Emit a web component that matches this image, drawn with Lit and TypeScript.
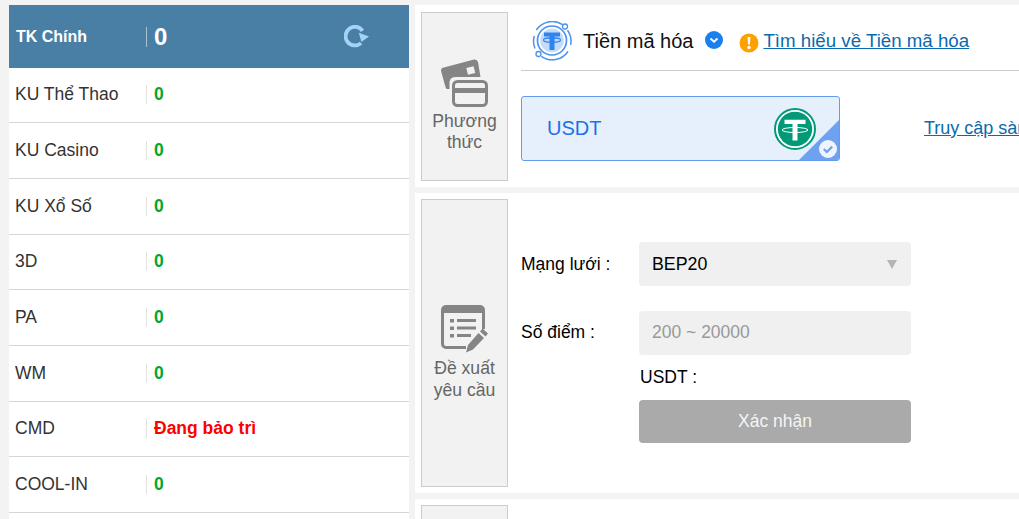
import { LitElement, html, css, svg } from "lit";
import { customElement } from "lit/decorators.js";

const rows: [string, string][] = [
  ["KU Thể Thao", "0"], ["KU Casino", "0"], ["KU Xổ Số", "0"], ["3D", "0"], ["PA", "0"],
  ["WM", "0"], ["CMD", "Đang bảo trì"], ["COOL-IN", "0"], ["", ""],
];

const refreshIcon = svg`<svg class="refresh" viewBox="0 0 26 24" width="26" height="24"><path d="M17 18.100A9.300 9.300 0 1 1 18.500 5.800" fill="none" stroke="#a3d3f7" stroke-width="3.800"/><path d="M14.800 7.800 25 11.500 17.400 17z" fill="#a3d3f7"/></svg>`;

const cardIcon = svg`<svg class="side-icon" viewBox="0 0 48 48" width="48" height="48">
  <path d="M1 9 33 .5Q36 0 37 3L39.500 18H15Q9 18 8.500 23V30H6Q5 30 4.500 28L0 12Q0 10 1 9Z" fill="#858585"/>
  <rect x="26" y="8" width="7.500" height="7" transform="rotate(-14 30 11.500)" fill="#f2f2f2"/>
  <rect x="12.500" y="22.500" width="33" height="24" rx="4" fill="none" stroke="#858585" stroke-width="3"/>
  <rect x="12.500" y="29" width="33" height="5" fill="#858585"/>
</svg>`;

const formIcon = svg`<svg class="side-icon" viewBox="0 0 48 48" width="48" height="48">
  <path d="M1.500 5V39a3.500 3.500 0 0 0 3.500 3.500H25M42.500 24V5" fill="none" stroke="#858585" stroke-width="3"/>
  <path d="M0 5a5 5 0 0 1 5-5h34a5 5 0 0 1 5 5v3H0z" fill="#858585"/>
  <g fill="#858585"><rect x="9" y="14" width="4" height="3.500"/><rect x="9" y="21.500" width="4" height="3.500"/><rect x="9" y="29" width="4" height="3.500"/>
  <rect x="16" y="14" width="19" height="3"/><rect x="16" y="21.500" width="19" height="3"/><rect x="16" y="29" width="14" height="3"/>
  <path d="M41.500 23.500l5.500 5-2.500 3-5.500-5zM37.500 28l5.500 5-11 11.500-7 3 2-7.500z"/></g>
</svg>`;

const coinOutline = svg`<svg viewBox="0 0 40 40" width="40" height="40">
  <path d="M30.500 3.600A19 19 0 0 0 4.300 9M2.300 15A19 19 0 0 0 3 27.500M9.300 35.300A19 19 0 0 0 36 30.500M38.600 24A19 19 0 0 0 35.500 9.200" fill="none" stroke="#4b93ee" stroke-width="1.500"/>
  <circle cx="33" cy="5.500" r="2.500" fill="#fff" stroke="#4b93ee" stroke-width="1.300"/>
  <circle cx="6.500" cy="33" r="2.500" fill="#fff" stroke="#4b93ee" stroke-width="1.300"/>
  <circle cx="20" cy="19.500" r="14.500" fill="#fff" stroke="#4b93ee" stroke-width="1.700"/>
  <circle cx="20" cy="19.500" r="11.800" fill="#c4dbfa"/>
  <path d="M12 11.500h16v4h-5.500v13.500h-5V15.500H12z" fill="#2f84ef"/>
  <ellipse cx="20" cy="19" rx="8.500" ry="2.200" fill="none" stroke="#2f84ef" stroke-width="1.400"/>
</svg>`;

const tether = svg`<svg class="tether" viewBox="0 0 42 42" width="42" height="42">
  <circle cx="21" cy="21" r="20" fill="#fff" stroke="#009a78" stroke-width="2"/>
  <circle cx="21" cy="21" r="17.200" fill="#009a78"/>
  <path d="M10.500 11.800h21v4.200h-8v16.500h-5V16h-8z" fill="#fff"/>
  <ellipse cx="21" cy="22" rx="13" ry="2.500" fill="none" stroke="#fff" stroke-width="1"/>
</svg>`;

@customElement("app-root")
export class AppRoot extends LitElement {
  static styles = css`
    :host {
      display: flex; gap: 6px; height: 519px; width: 1019px; overflow: hidden;
      padding: 5px 0 0 9px; box-sizing: border-box; background: #f3f3f3;
      font-family: "Liberation Sans", Arial, sans-serif; color: #333;
    }
    .sidebar { width: 400px; flex: none; background: #fff; }
    .head { height: 62.600px; box-sizing: border-box; padding-top: 1px; background: #4a7fa5; display: flex; align-items: center; color: #fff; }
    .row { height: 55.680px; box-sizing: border-box; border-bottom: 1px solid #d6d6d6; display: flex; align-items: center; font-size: 17.500px; }
    .name { width: 137px; flex: none; box-sizing: border-box; padding-left: 6px; white-space: nowrap; }
    .head .name { font-size: 16px; font-weight: bold; padding-left: 7px; }
    .val { border-left: 1px solid #e2e2e2; padding-left: 7px; font-weight: bold; line-height: 19px; color: #00a72d; }
    .val.down { color: #f00; }
    .head .val { color: #fff; font-size: 24px; border-left-color: #a9c2d4; line-height: 20px; }
    .refresh { margin-left: 177px; }
    .main { flex: 1; min-width: 0; display: flex; flex-direction: column; gap: 6px; }
    .panel { background: #fff; padding: 7px 0 6px 6px; display: flex; gap: 13px; flex: none; box-sizing: border-box; }
    .p1 { height: 182px; }
    .p2 { height: 300px; padding-top: 6px; }
    .p3 { height: 60px; padding-top: 6px; }
    .side {
      width: 87px; flex: none; box-sizing: border-box; border: 1px solid #ccc; background: #f2f2f2;
      display: flex; flex-direction: column; align-items: center; justify-content: center;
      font-size: 17.600px; line-height: 21.500px; color: #666; text-align: center; padding-top: 19px;
    }
    .p2 .side { line-height: 22px; padding-top: 20px; }
    .side-icon { margin-bottom: 4px; flex: none; }
    .content { flex: 1; min-width: 0; }
    .method { height: 59px; border-bottom: 1px solid #ccc; display: flex; align-items: center; white-space: nowrap; padding-left: 11px; box-sizing: border-box; }
    .method-title { font-size: 20px; color: #111; margin-left: 11px; }
    .chev { margin-left: 12px; margin-bottom: 2px; }
    .warn { margin-left: 16px; margin-top: 4px; }
    a { color: #0a6aad; text-decoration: underline; }
    .learn { font-size: 18.700px; margin-left: 4px; }
    .tiles { display: flex; align-items: center; margin-top: 25px; white-space: nowrap; }
    .tile {
      width: 319px; height: 65px; flex: none; box-sizing: border-box; border: 1px solid #639cec; border-radius: 3px;
      background: #e6f0fd; display: flex; align-items: center; padding-left: 25px; color: #1f6fe8;
      font-size: 20px; position: relative; overflow: hidden;
    }
    .tether { position: absolute; left: 252px; top: 11px; }
    .corner { position: absolute; right: 0; bottom: 0; width: 40px; height: 40px; background: #6ea1f0; clip-path: polygon(100% 0, 100% 100%, 0 100%); }
    .check { position: absolute; right: 2px; bottom: 2px; }
    .truy { font-size: 18px; margin-left: 84px; }
    .form { display: grid; grid-template-columns: 118px 272px; padding-top: 43px; align-items: center; color: #000; font-size: 17.500px; }
    .field {
      height: 44px; background: #f0f0f0; border-radius: 4px; display: flex; align-items: center;
      justify-content: space-between; padding: 0 14px 0 13px; font-size: 17.800px; color: #000; box-sizing: border-box;
    }
    .gap { grid-column: 1 / 3; height: 25px; }
    .field.ph { color: #999; font-size: 17.500px; padding-bottom: 2px; }
    .label-up { padding-bottom: 2px; }
    .arrow { width: 0; height: 0; border: 5px solid transparent; border-top: 9px solid #b5b5b5; border-bottom: 0; }
    .usdt { grid-column: 2; height: 45px; display: flex; align-items: center; padding-left: 1px; }
    .submit {
      grid-column: 2; height: 43px; border-radius: 4px; background: #aaa; color: #f5f5f5; font-size: 17.500px;
      display: flex; align-items: center; justify-content: center;
    }
  `;

  render() {
    return html`
      <div class="sidebar">
        <div class="head"><span class="name">TK Chính</span><span class="val">0</span>${refreshIcon}</div>
        ${rows.map(([n, v]) => html`<div class="row"><span class="name">${n}</span>${v ? html`<span class="val ${v === "0" ? "" : "down"}">${v}</span>` : ""}</div>`)}
      </div>
      <div class="main">
        <section class="panel p1">
          <div class="side">${cardIcon}<span>Phương<br />thức</span></div>
          <div class="content">
            <div class="method">
              ${coinOutline}
              <span class="method-title">Tiền mã hóa</span>
              <svg class="chev" viewBox="0 0 18 18" width="18" height="18"><circle cx="9" cy="9" r="9" fill="#1a80f0"/><path d="M5.500 7.500 9 10.700l3.500-3.200" fill="none" stroke="#fff" stroke-width="1.800"/></svg>
              <svg class="warn" viewBox="0 0 20 20" width="20" height="20"><circle cx="10" cy="10" r="9.500" fill="#fba200"/><path d="M8.500 4h3l-.6 7.500H9.100z" fill="#fff"/><circle cx="10" cy="14.500" r="1.700" fill="#fff"/></svg>
              <a class="learn" href="#">Tìm hiểu về Tiền mã hóa</a>
            </div>
            <div class="tiles">
              <div class="tile">USDT${tether}<span class="corner"></span>
                <svg class="check" viewBox="0 0 18 18" width="18" height="18"><circle cx="9" cy="9" r="9" fill="#f0f5fd"/><path d="M4.800 9l3 3 5.400-5.400" fill="none" stroke="#6ea1f0" stroke-width="2.200"/></svg>
              </div>
              <a class="truy" href="#">Truy cập sàn giao dịch</a>
            </div>
          </div>
        </section>
        <section class="panel p2">
          <div class="side">${formIcon}<span>Đề xuất<br />yêu cầu</span></div>
          <div class="content">
            <div class="form">
              <span>Mạng lưới :</span>
              <div class="field"><span>BEP20</span><span class="arrow"></span></div>
              <div class="gap"></div>
              <span class="label-up">Số điểm :</span>
              <div class="field ph">200 ~ 20000</div>
              <div class="usdt">USDT :</div>
              <div class="submit">Xác nhận</div>
            </div>
          </div>
        </section>
        <section class="panel p3"><div class="side"></div></section>
      </div>
    `;
  }
}
